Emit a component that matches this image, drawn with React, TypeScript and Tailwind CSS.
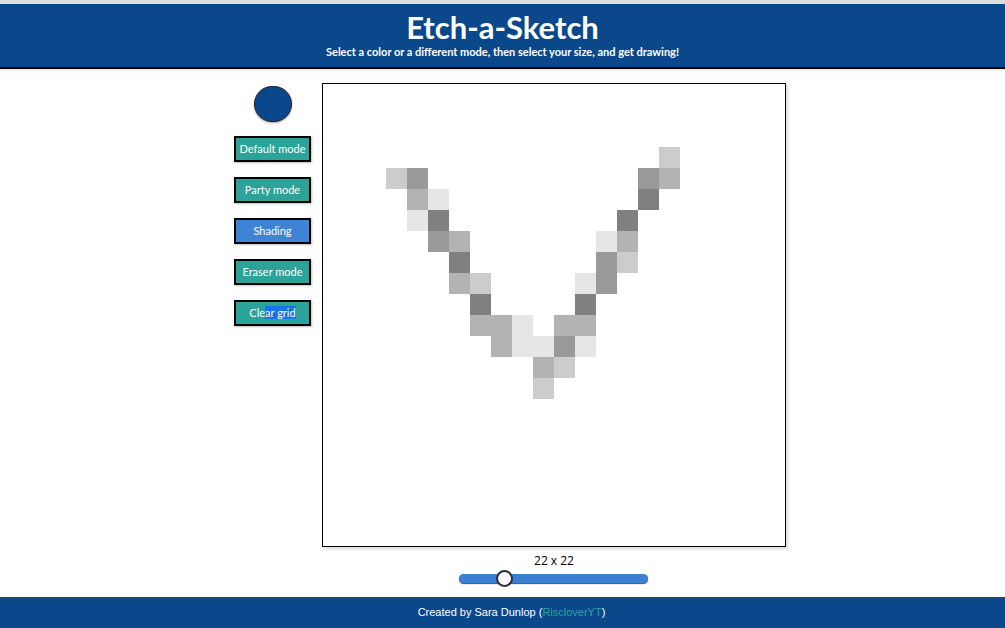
import React from 'react';

const N = 22;

// shaded cells: [col, row, colour]
const shaded: [number, number, string][] = [
    [16, 3, '#cccccc'],
    [3, 4, '#cccccc'], [4, 4, '#999999'], [15, 4, '#999999'], [16, 4, '#b3b3b3'],
    [4, 5, '#b3b3b3'], [5, 5, '#e6e6e6'], [15, 5, '#808080'],
    [4, 6, '#e6e6e6'], [5, 6, '#808080'], [14, 6, '#808080'],
    [5, 7, '#999999'], [6, 7, '#b3b3b3'], [13, 7, '#e6e6e6'], [14, 7, '#b3b3b3'],
    [6, 8, '#808080'], [13, 8, '#999999'], [14, 8, '#cccccc'],
    [6, 9, '#b3b3b3'], [7, 9, '#cccccc'], [12, 9, '#e6e6e6'], [13, 9, '#999999'],
    [7, 10, '#808080'], [12, 10, '#808080'],
    [7, 11, '#b3b3b3'], [8, 11, '#b3b3b3'], [9, 11, '#e6e6e6'], [11, 11, '#b3b3b3'], [12, 11, '#b3b3b3'],
    [8, 12, '#b3b3b3'], [9, 12, '#e6e6e6'], [10, 12, '#e6e6e6'], [11, 12, '#999999'], [12, 12, '#e6e6e6'],
    [10, 13, '#b3b3b3'], [11, 13, '#cccccc'],
    [10, 14, '#cccccc'],
];

const colourAt = (c: number, r: number) => {
    const hit = shaded.find(([x, y]) => x === c && y === r);
    return hit ? hit[2] : '#ffffff';
};

const ModeButton: React.FC<{ label: React.ReactNode; active?: boolean }> = ({ label, active }) => (
    <button
        className={
            active
                ? 'w-[77px] h-[26px] border-2 border-black bg-[#3d84d8] text-white text-[11px] shadow-[1px_1px_2px_rgba(0,0,0,0.25)]'
                : 'w-[77px] h-[26px] border-2 border-black bg-[#2ba398] text-white text-[11px] shadow-[1px_1px_2px_rgba(0,0,0,0.25)]'
        }
    >
        {label}
    </button>
);

export default function App() {
    const cells = [];
    for (let r = 0; r < N; r++) {
        for (let c = 0; c < N; c++) {
            cells.push(<div key={r * N + c} style={{ backgroundColor: colourAt(c, r) }} />);
        }
    }

    return (
        <div className="w-[1005px] h-[628px] bg-white flex flex-col font-['Lato','Liberation_Sans',sans-serif]">
            <div className="h-[4px] bg-[#dedede]" />
            <header className="bg-[#0b488b] border-b-2 border-black h-[65px] flex flex-col items-center pt-[6px] shadow-[0_1px_2px_rgba(0,0,0,0.15)]">
                <h1 className="text-white font-bold text-[31px] leading-[34px]">Etch-a-Sketch</h1>
                <p className="text-white font-bold text-[11px] leading-[14px] mt-[1px]">
                    Select a color or a different mode, then select your size, and get drawing!
                </p>
            </header>

            <main className="flex-1 flex flex-col items-center pt-[14px] pl-[15px]">
                <div className="flex gap-[11px]">
                    <div className="flex flex-col items-center pt-[3px] gap-[15px]">
                        <div className="w-[38px] h-[36px] rounded-full bg-[#0b488b] border border-[#222] shadow-[0_1px_2px_rgba(0,0,0,0.35)] mb-[-1px]" />
                        <ModeButton label="Default mode" />
                        <ModeButton label="Party mode" />
                        <ModeButton label="Shading" active />
                        <ModeButton label="Eraser mode" />
                        <ModeButton
                            label={
                                <>
                                    Cle<span className="bg-[#1a73e8]">ar grid</span>
                                </>
                            }
                        />
                    </div>
                    <div className="flex flex-col items-center">
                        <div className="border border-black grid grid-cols-[repeat(22,21px)] grid-rows-[repeat(22,21px)] shadow-[2px_2px_3px_rgba(0,0,0,0.15)]">
                            {cells}
                        </div>
                        <div className="mt-[7px] text-[12px] leading-[14px] text-black font-['Open_Sans',sans-serif]">22 x 22</div>
                        <div className="relative mt-[6px] mr-[2px] w-[189px] h-[9px] rounded-full bg-[#3a80d6] shadow-[0_1px_1px_rgba(0,0,0,0.7)]">
                            <div className="absolute left-[37px] top-[-4px] w-[17px] h-[17px] rounded-full bg-white border-2 border-[#2b2b3a]" />
                        </div>
                    </div>
                </div>
            </main>

            <footer className="h-[31px] bg-[#0b488b] flex items-center justify-center text-white text-[11px] font-['Liberation_Sans',sans-serif] pl-[18px]">
                Created by Sara Dunlop (<span className="text-[#2ba398]">RiscloverYT</span>)
            </footer>
        </div>
    );
}
